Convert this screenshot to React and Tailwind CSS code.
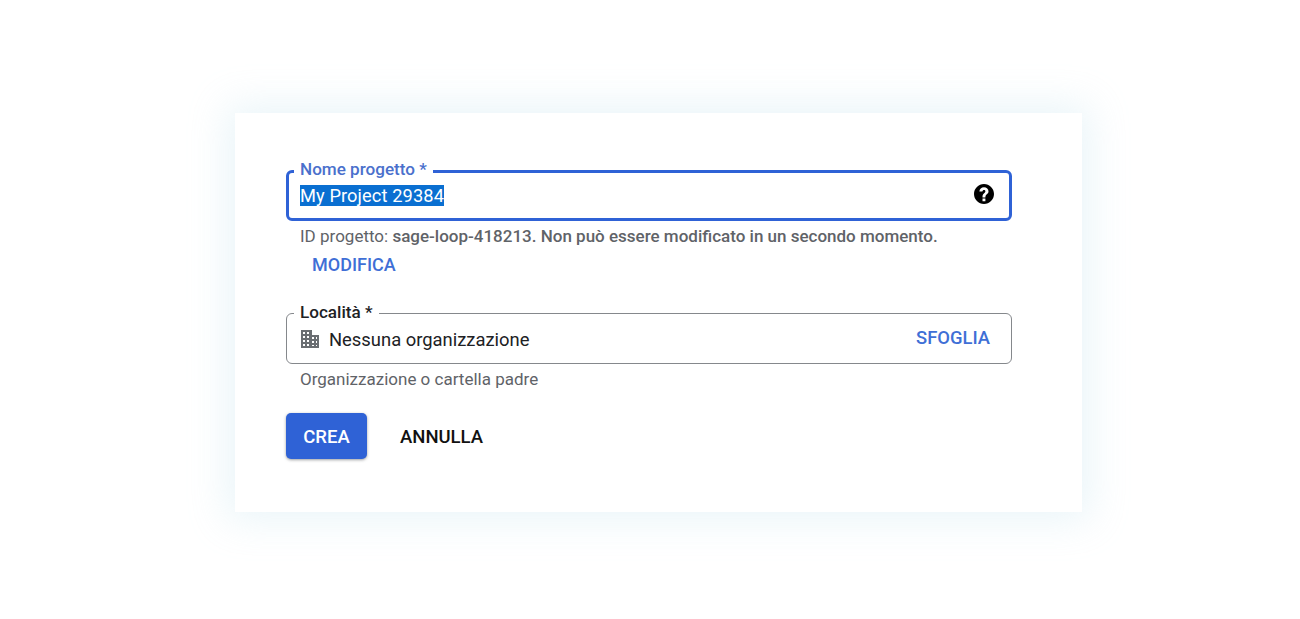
export default function App() {
  const font = { fontFamily: "Roboto, sans-serif" };
  return (
    <div style={font} className="h-[619px] w-full bg-white flex justify-center pt-[113px] pl-[17px] overflow-hidden">
      <div className="w-[847px] h-[399px] bg-white pl-[51px] pr-[70px] pt-[57px] shadow-[0_0_36px_8px_rgba(185,222,235,0.3)]">
        <div className="relative h-[51px] border-[3.5px] border-[#2f62d6] rounded-[6px] flex items-center pl-[11px] pr-[13px] justify-between">
          <span className="absolute -top-[14px] left-[5px] bg-white px-[6px] text-[17.1px] leading-[20px] font-medium text-[#4a70cc]">Nome progetto *</span>
          <span className="bg-[#0a6fd1] text-white text-[18.25px] leading-[21px] tracking-[0.1px]">My Project 29384</span>
          <svg width="24" height="24" viewBox="0 0 24 24" fill="#000" className="-mt-[4px]">
            <path d="M12 2C6.48 2 2 6.48 2 12s4.48 10 10 10 10-4.48 10-10S17.52 2 12 2zm1.4 17.2h-2.9v-2.7h2.9v2.7zm2.1-7.6l-.9.92c-.9.9-1.2 1.4-1.2 2.88h-2.9v-.7c0-1.3.45-2.3 1.17-3.03l1.24-1.26c.37-.36.49-.66.49-1.11 0-.75-.6-1.3-1.4-1.3-.9 0-1.5.6-1.6 1.6H7.4c.1-2.6 2-4.3 4.6-4.3s4.5 1.7 4.5 4.1c0 .88-.36 1.8-1 2.4z" />
          </svg>
        </div>
        <p className="mt-[5px] pl-[14px] text-[17px] leading-[20px] font-medium text-[#5f6368] whitespace-nowrap">
          <span className="font-normal">ID progetto: </span>sage-loop-418213. Non può essere modificato in un secondo momento.
        </p>
        <div className="mt-[9px] pl-[26px] text-[18px] leading-[20px] font-medium text-[#3f6fd6]">MODIFICA</div>

        <div className="relative mt-[38px] h-[51px] border-[1.5px] border-[#85888c] rounded-[6px] flex items-center pl-[13px] pr-[21px] justify-between">
          <span className="absolute -top-[12px] left-[7px] bg-white px-[6px] text-[17.1px] leading-[20px] font-medium text-[#202124]">Località *</span>
          <div className="flex items-center gap-[9px] pt-[1px]">
            <svg width="20" height="20" viewBox="0 0 20 20" fill="#6a6e72">
              <path fillRule="evenodd" d="M1 1h11v5h7v13H1V1zm2 2v2h2V3H3zm4 0v2h2V3H7zM3 7v2h2V7H3zm4 0v2h2V7H7zm5 1v2h2V8h-2zm4 0v2h1V8h-1zM3 11v2h2v-2H3zm4 0v2h2v-2H7zm5 1v2h2v-2h-2zm4 0v2h1v-2h-1zM3 15v2h2v-2H3zm4 0v2h2v-2H7zm5 1v1h2v-1h-2zm4 0v1h1v-1h-1z" />
            </svg>
            <span className="text-[18.4px] leading-[21px] text-[#202124]">Nessuna organizzazione</span>
          </div>
          <span className="text-[18.4px] leading-[20px] font-medium text-[#3f6fd6] -mt-[2px]">SFOGLIA</span>
        </div>
        <p className="mt-[5px] pl-[14px] text-[17px] leading-[20px] text-[#5f6368]">Organizzazione o cartella padre</p>

        <div className="mt-[24px] flex items-center">
          <button className="w-[81px] h-[46px] pt-[3px] rounded-[5px] bg-[#2f62d6] text-white text-[18.5px] font-medium shadow-[0_1px_3px_rgba(60,64,67,0.5)]">CREA</button>
          <button className="ml-[33px] pt-[3px] text-[18.5px] font-medium text-[#111]">ANNULLA</button>
        </div>
      </div>
    </div>
  );
}
